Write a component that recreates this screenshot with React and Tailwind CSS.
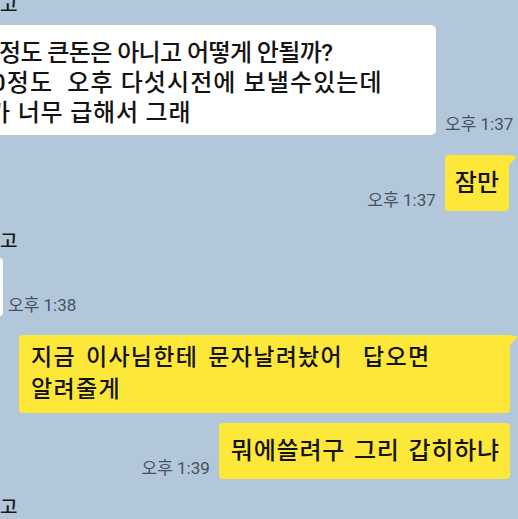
import React from 'react';

const FONT = { fontFamily: 'Roboto, "Noto Sans CJK KR", "Noto Sans", sans-serif' };

const Tail = () => (
  <svg className="absolute -right-[8px] top-0" width="9" height="12" viewBox="0 0 9 12">
    <path d="M0 0 L9 1.5 L0 11 Z" fill="#fde83a" />
  </svg>
);

const Time = ({ children, className = '' }) => (
  <span className={`text-[17px] leading-[17px] font-normal text-[#47525e] whitespace-nowrap ${className}`}>{children}</span>
);

const Name = ({ className = '' }) => (
  <p className={`text-[19px] leading-[20px] text-[#1a1a1a] ${className}`}>고</p>
);

export default function App() {
  return (
    <div className="w-[518px] h-[519px] overflow-hidden bg-[#b2c7da] flex flex-col text-[#141414] font-medium" style={FONT}>
      <Name className="-mt-[4px]" />

      {/* incoming message, cropped on the left */}
      <div className="flex items-end mt-[9px]">
        <div className="-ml-[20px] w-[456px] shrink-0 bg-white rounded-[5px] pl-[7px] pt-[13px] pb-[7px] text-[24px] leading-[30px]">
          <p className="ml-[12px] whitespace-nowrap tracking-[-0.6px]">정도 큰돈은 아니고 어떻게 안될까?</p>
          <p className="ml-[5px] whitespace-pre tracking-[1.1px]">0정도  오후 다섯시전에 보낼수있는데</p>
          <p className="ml-[1px] whitespace-nowrap tracking-[0.8px]">가 너무 급해서 그래</p>
        </div>
        <Time className="ml-[9px] mb-[2px]">오후 1:37</Time>
      </div>

      <div className="flex items-end justify-end mt-[20px] pr-[9px]">
        <Time className="mr-[9px] mb-[2px]">오후 1:37</Time>
        <div className="relative h-[56px] flex items-center bg-[#fde83a] rounded-[4px] px-[10px] text-[24px] leading-[30px]">
          잠만
          <Tail />
        </div>
      </div>

      <Name className="mt-[21px]" />

      <div className="flex items-end mt-[6px]">
        <div className="-ml-[40px] w-[43px] h-[58px] shrink-0 bg-white rounded-[4px]" />
        <Time className="ml-[5px] mb-[2px]">오후 1:38</Time>
      </div>

      <div className="flex justify-end mt-[19px] pr-[8px]">
        <div className="relative w-[491px] bg-[#fde83a] rounded-[4px] pl-[12px] py-[7px] text-[23px] leading-[32px] tracking-[1.3px] [word-spacing:3px]">
          <p className="whitespace-pre">지금 이사님한테 문자날려놨어  답오면</p>
          <p>알려줄게</p>
          <Tail />
        </div>
      </div>

      <div className="flex items-end justify-end mt-[10px] pr-[8px]">
        <Time className="mr-[9px] mb-[2px]">오후 1:39</Time>
        <div className="h-[56px] flex items-center bg-[#fde83a] rounded-[4px] pl-[12px] pr-[10px] text-[24px] leading-[30px] whitespace-nowrap tracking-[0.8px] [word-spacing:2px]">
          뭐에쓸려구 그리 갑히하냐
        </div>
      </div>

      <Name className="mt-[19px]" />
    </div>
  );
}
